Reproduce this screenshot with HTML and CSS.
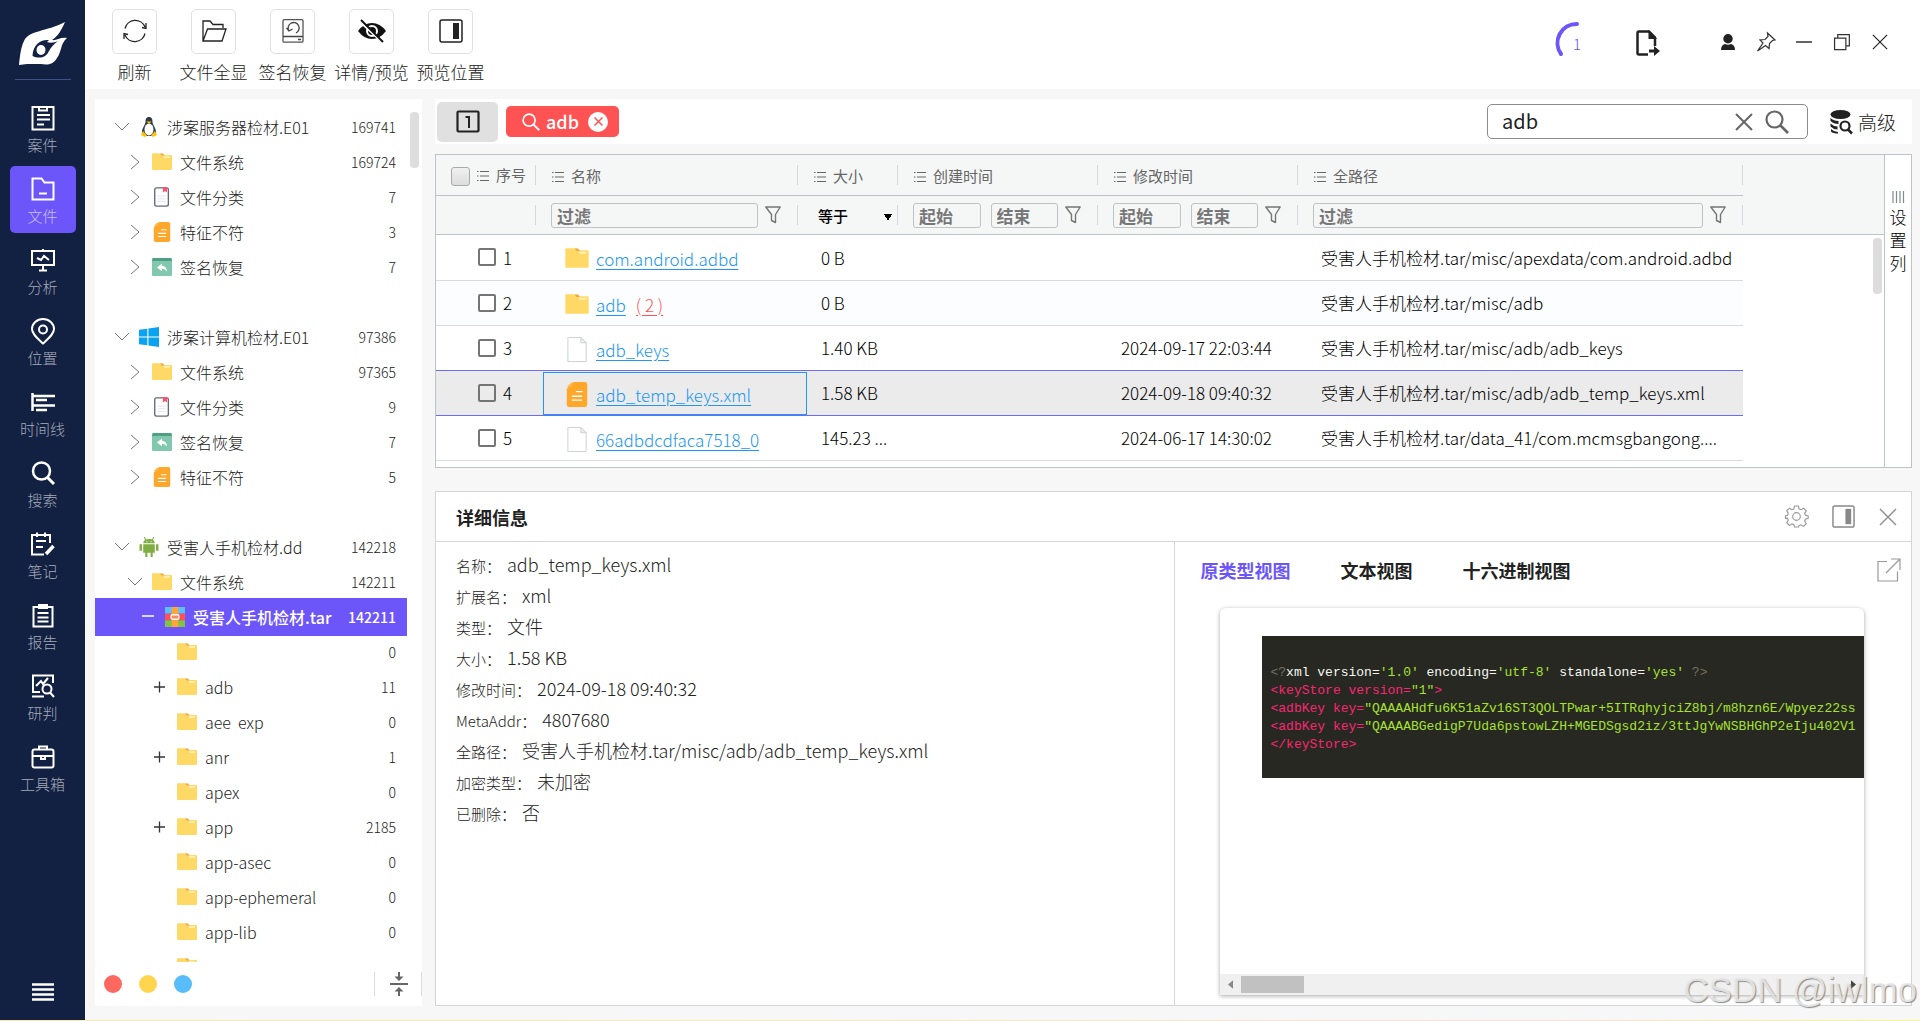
FILE: index.html
```html
<!DOCTYPE html>
<html lang="zh-CN">
<head>
    <meta charset="UTF-8">
    <meta name="viewport" content="width=device-width, initial-scale=1.0">
    <title>文件</title>
    <link rel="stylesheet" href="styles.css">
</head>
<body>
<!-- shared icons -->
<svg class="sprite" xmlns="http://www.w3.org/2000/svg">
    <symbol id="i-down" viewBox="0 0 16 16"><path d="M1 4l7 7 7-7" fill="none" stroke="#777"/></symbol>
    <symbol id="i-right" viewBox="0 0 16 16"><path d="M4 1l8 7-8 7" fill="none" stroke="#777"/></symbol>
    <symbol id="i-plus" viewBox="0 0 16 16"><path d="M2 8h11M7.500 2.500v11" fill="none" stroke="#333" stroke-width="1.300"/></symbol>
    <symbol id="i-minus" viewBox="0 0 16 16"><path d="M2 7h12" fill="none" stroke="#fff" stroke-width="1.500"/></symbol>
    <symbol id="i-folder" viewBox="0 0 20 18"><path d="M0 1.500Q0 .5 1 .5h6.500l2 1.500H0z" fill="#ffd15c"/><path d="M0 1.500Q0 .5 1 .5h9l2 1.500h7q1 0 1 1v13q0 1-1 1H1q-1 0-1-1z" fill="#ffd966"/><path d="M8 .5h3l1.500 2H9.500z" fill="#f5a54a"/><path d="M12 4h6" stroke="#fff3c4" stroke-width="1.500"/></symbol>
    <symbol id="i-class" viewBox="0 0 20 22"><rect x="2" y="1" width="15" height="20" rx="2" fill="#fff" stroke="#666a78" stroke-width="1.500"/><path d="M11 0h4.500v6l-2.200-1.500L11 6z" fill="#ff4f6d"/><path d="M5 10h9M5 13h9M5 16h9" stroke="#dfe3ee"/></symbol>
    <symbol id="i-orange" viewBox="0 0 18 22"><path d="M6 0h10q2 0 2 2v18q0 2-2 2H2q-2 0-2-2V6z" fill="#ffa72b"/><path d="M0 4.500L4.500 0v3q0 1.500-1.500 1.500z" fill="#ffb74f"/><path d="M8 8.500h6M4.500 12.500h9M4.500 16h9" stroke="#fff" stroke-width="1.200"/></symbol>
    <symbol id="i-restore-sign" viewBox="0 0 20 18"><rect width="20" height="18" rx="1" fill="#82c8ae"/><path d="M1 0h18l1 3H0z" fill="#4f9f83"/><path d="M5 9.500l5-4v2.300q4.500.3 5 5.700-2-3-5-2.800v2.600z" fill="#fff"/></symbol>
    <symbol id="i-linux" viewBox="0 0 18 20"><path d="M9 0c3 0 3.500 2.500 3.500 5S16 11 16 15s-3 4-7 4-7 0-7-4 3.500-7.500 3.500-10S6 0 9 0z" fill="#2d3a4a"/><ellipse cx="9" cy="12.500" rx="4.500" ry="6" fill="#fff"/><path d="M6.500 4.500h5L9 7z" fill="#ffc107"/><path d="M1 18l2-4 4 4.500-2 1.500zM17 18l-2-4-4 4.500 2 1.500z" fill="#ffc107"/></symbol>
    <symbol id="i-win" viewBox="0 0 18 18"><path d="M0 2.500l7.500-1v7H0zM8.500 1.300L18 0v8.500H8.500zM0 9.500h7.500v7l-7.500-1zM8.500 9.500H18V18l-9.500-1.300z" fill="#0aa3f2"/></symbol>
    <symbol id="i-android" viewBox="0 0 18 19"><path d="M3.500 7h11v8h-11zM5.500 15h2v4h-2zM10.500 15h2v4h-2zM0 7h2.300v6H0zM15.700 7H18v6h-2.300zM3.500 6q.5-4 5.500-4t5.500 4z" fill="#7fae42"/><path d="M6 3L4.500 0M12 3l1.500-3" stroke="#7fae42"/><path d="M6.500 4.500h1M10.500 4.500h1" stroke="#fff"/></symbol>
    <symbol id="i-rar" viewBox="0 0 18 18"><path d="M0 0h18v6H0z" fill="#5cc0fa"/><path d="M0 6h18v6H0z" fill="#ff5252"/><path d="M0 12h18v6H0z" fill="#82c341"/><path d="M6 0h6v18H6z" fill="#ffa53a"/><rect x="5.500" y="7" width="7" height="4" rx="1" fill="#ff8a50" stroke="#fff" stroke-width="1.200"/></symbol>
    <symbol id="i-file" viewBox="0 0 20 26"><path d="M.5.5H14l5.500 5.500v19.500H.5z" fill="#fff" stroke="#ccd0d6"/><path d="M14 .5V6h5.500z" fill="#eef0f3" stroke="#ccd0d6"/></symbol>
    <symbol id="i-list" viewBox="0 0 12 12"><path d="M0 1.500h1.500M3 1.500h9M0 6h1.500M3 6h9M0 10.500h1.500M3 10.500h9" stroke="#666" stroke-width="1.200"/></symbol>
    <symbol id="i-funnel" viewBox="0 0 16 18"><path d="M.8 1h14.400L10.500 8.500V16.500L6.500 14.500V8.500z" fill="none" stroke="#757575" stroke-width="1.400" stroke-linejoin="round"/></symbol>
    <symbol id="i-layout" viewBox="0 0 24 24"><rect x="1" y="1" width="22" height="22" rx="2" fill="none" stroke="currentColor" stroke-width="1.500"/><path d="M14 4h6v16h-6z" fill="currentColor"/></symbol>
    <symbol id="i-search" viewBox="0 0 24 24"><circle cx="9.500" cy="9.500" r="8" fill="none" stroke="currentColor" stroke-width="2.200"/><path d="M15.500 15.500L23 23" stroke="currentColor" stroke-width="2.600"/></symbol>
    <symbol id="i-close" viewBox="0 0 18 18"><path d="M1 1l16 16M17 1L1 17" fill="none" stroke="currentColor"/></symbol>
</svg>

<div class="app">
    <nav class="side">
        <svg class="logo" viewBox="0 0 48 44"><path d="M0 43C1 33 2 25 5 19 10 8 27 10 46 0 42 9 39 14 33 18 37 19 41 15 48 16 41 22 43 29 38 36 34 43 28 43 22 42H8z" fill="#fff"/><path d="M30 18C22 17 14 22 13.500 34 20 37 27 36 30 29 32 25 35 22 39 19 35 21 31 21 28 20z" fill="#122042"/><ellipse cx="22" cy="28" rx="4.500" ry="5" fill="#fff"/></svg>
        <hr>
        <a href="#" class="side-item"><svg viewBox="0 0 24 24"><path d="M1.500 1h21v22.500h-21z"/><path d="M8 1v3.500h8V1M6 9h13M6 13.500h13M6 18.500h7"/></svg>案件</a>
        <a href="#" class="side-item active"><svg viewBox="0 0 24 24"><path d="M1.500 1.500h9l3 4h9v17h-21zM8 16.500h8"/></svg>文件</a>
        <a href="#" class="side-item"><svg viewBox="0 0 24 24"><path d="M1 3h22v14H1zM12 1v2M12 17v5M8 22.500h8M6 10l4 2 3-4 5 4"/></svg>分析</a>
        <a href="#" class="side-item"><svg viewBox="0 0 24 24"><path d="M12 24.500C6 19 1 15 1 10a11 10 0 0 1 22 0c0 5-5 9-11 14.500z"/><circle cx="12" cy="10.500" r="4"/></svg>位置</a>
        <a href="#" class="side-item"><svg viewBox="0 0 24 24"><path d="M1.500 3v18M1 6h23M5 10h11M1 15.500h23M5 20h11" stroke-width="2.500"/></svg>时间线</a>
        <a href="#" class="side-item"><svg viewBox="0 0 24 24"><circle cx="10.500" cy="10" r="8.500" stroke-width="2.500"/><path d="M16.500 16.500l6.500 6.500" stroke-width="3"/></svg>搜索</a>
        <a href="#" class="side-item"><svg viewBox="0 0 24 24"><path d="M13 22.500H1V3h18v8M6 .5V5M14 .5V5M5 9h10M5 15h7"/><path d="M15 22l7.500-8" stroke-width="3.500"/></svg>笔记</a>
        <a href="#" class="side-item"><svg viewBox="0 0 24 24"><path d="M2.500 4h19v19.500h-19zM6.500 10h11M6.500 14.500h11M6.500 18.500h11"/><path d="M8 5V2h8v3z" fill="#fff"/></svg>报告</a>
        <a href="#" class="side-item"><svg viewBox="0 0 24 24"><path d="M22 9V1.500H2V18h7M1 22.500h12M5 12l5-5 2 3 5-6"/><circle cx="16" cy="15" r="4.500"/><path d="M19 18.500l4 4.500"/></svg>研判</a>
        <a href="#" class="side-item"><svg viewBox="0 0 24 24"><rect x="1.500" y="4.500" width="21" height="18" rx="2"/><path d="M8 4V1.500h8V4M2 11h20M10 11v3h4v-3"/></svg>工具箱</a>
        <button class="menu-btn" aria-label="菜单"><svg viewBox="0 0 22 18"><path d="M0 1.500h22M0 6.500h22M0 11.500h22M0 16.500h22" stroke="#fff" stroke-width="2.500"/></svg></button>
    </nav>

    <div class="content">
        <header class="toolbar">
            <div class="tools">
                <button class="tool"><span class="tool-icon"><svg viewBox="0 0 24 24"><path d="M2 9.500A10.500 10.500 0 0 1 22 8M22 14.500A10.500 10.500 0 0 1 2 16M23 4v5.500l-4-1M1 20v-5.500l4 1" fill="none" stroke="#222" stroke-width="1.300"/></svg></span>刷新</button>
                <button class="tool"><span class="tool-icon"><svg viewBox="0 0 24 24"><path d="M1 22V2h7l3 3.500h10V9M1 22L5.500 10H24l-4 12z" fill="none" stroke="#222" stroke-width="1.300"/></svg></span>文件全显</button>
                <button class="tool"><span class="tool-icon"><svg viewBox="0 0 24 24"><rect x="2" y=".7" width="20" height="22.500" rx="1" fill="none" stroke="#555" stroke-width="1.300"/><path d="M2 17.500h20M17 20.500h3M8 12a5.500 5.500 0 1 1 7 2M5.500 9L8 12l3.500-2" fill="none" stroke="#444" stroke-width="1.300"/></svg></span>签名恢复</button>
                <button class="tool"><span class="tool-icon"><svg class="eye" viewBox="0 0 28 24"><path d="M0 12Q6 4 14 4t14 8q-6 8-14 8T0 12z" fill="#111"/><circle cx="14" cy="12" r="5" fill="none" stroke="#fff" stroke-width="2"/><path d="M1 2l24 22" stroke="#fff" stroke-width="2"/><path d="M3 1l22 22" stroke="#111" stroke-width="2"/></svg></span>详情/预览</button>
                <button class="tool"><span class="tool-icon"><svg><use href="#i-layout"/></svg></span>预览位置</button>
            </div>
            <div class="window-tools">
                <div class="progress"><svg viewBox="0 0 42 42"><path d="M21 2A19 19 0 0 0 5 32" fill="none" stroke="#6c55f9" stroke-width="4" stroke-linecap="round"/></svg><span>1</span></div>
                <button class="export" aria-label="导出"><svg viewBox="0 0 24 26"><path d="M12 24.500H3q-1.500 0-1.500-1.500V3Q1.500 1.500 3 1.500h10l6 6V16" fill="none" stroke="#222" stroke-width="2.500"/><path d="M12.500 0L21 9h-8.500z" fill="#222"/><path d="M13 19.500h5V16l6 5-6 5v-3.500h-5z" fill="#222"/></svg></button>
                <div class="window-btns">
                    <button aria-label="用户"><svg viewBox="0 0 16 16"><path d="M8 0a4.500 4.500 0 1 1 0 9.500A4.500 4.500 0 0 1 8 0zM1 16q0-5 4-6 3 1.500 6 0 4 1 4 6z" fill="#222"/></svg></button>
                    <button aria-label="固定"><svg viewBox="1 1 16 16"><path d="M10.500 0l7.500 7-2.500.5-3 3-.5 5-3.500-3-8 5.500 5.500-8L3 7l5-.5 3-3z" fill="none" stroke="#333" stroke-width="1.200"/></svg></button>
                    <button aria-label="最小化"><svg viewBox="0 0 16 16"><path d="M0 8h16" stroke="#222" stroke-width="1.400"/></svg></button>
                    <button aria-label="还原"><svg viewBox="0 0 17 17"><path d="M.6 4.500h12v12H.6zM4 4V.7h12.300v12H13" fill="none" stroke="#333"/></svg></button>
                    <button aria-label="关闭"><svg><use href="#i-close"/></svg></button>
                </div>
            </div>
        </header>

        <div class="workspace">
            <aside class="tree-panel">
                <ul class="tree">
                    <li class="node"><svg class="twist"><use href="#i-down"/></svg><svg class="ico"><use href="#i-linux"/></svg><span>涉案服务器检材.E01</span><b>169741</b></li>
                    <li class="node l1"><svg class="twist"><use href="#i-right"/></svg><svg class="ico"><use href="#i-folder"/></svg><span>文件系统</span><b>169724</b></li>
                    <li class="node l1"><svg class="twist"><use href="#i-right"/></svg><svg class="ico"><use href="#i-class"/></svg><span>文件分类</span><b>7</b></li>
                    <li class="node l1"><svg class="twist"><use href="#i-right"/></svg><svg class="ico"><use href="#i-orange"/></svg><span>特征不符</span><b>3</b></li>
                    <li class="node l1"><svg class="twist"><use href="#i-right"/></svg><svg class="ico"><use href="#i-restore-sign"/></svg><span>签名恢复</span><b>7</b></li>
                    <li class="node root"><svg class="twist"><use href="#i-down"/></svg><svg class="ico"><use href="#i-win"/></svg><span>涉案计算机检材.E01</span><b>97386</b></li>
                    <li class="node l1"><svg class="twist"><use href="#i-right"/></svg><svg class="ico"><use href="#i-folder"/></svg><span>文件系统</span><b>97365</b></li>
                    <li class="node l1"><svg class="twist"><use href="#i-right"/></svg><svg class="ico"><use href="#i-class"/></svg><span>文件分类</span><b>9</b></li>
                    <li class="node l1"><svg class="twist"><use href="#i-right"/></svg><svg class="ico"><use href="#i-restore-sign"/></svg><span>签名恢复</span><b>7</b></li>
                    <li class="node l1"><svg class="twist"><use href="#i-right"/></svg><svg class="ico"><use href="#i-orange"/></svg><span>特征不符</span><b>5</b></li>
                    <li class="node root"><svg class="twist"><use href="#i-down"/></svg><svg class="ico"><use href="#i-android"/></svg><span>受害人手机检材.dd</span><b>142218</b></li>
                    <li class="node l1"><svg class="twist"><use href="#i-down"/></svg><svg class="ico"><use href="#i-folder"/></svg><span>文件系统</span><b>142211</b></li>
                    <li class="node l2 selected"><svg class="twist"><use href="#i-minus"/></svg><svg class="ico"><use href="#i-rar"/></svg><span>受害人手机检材.tar</span><b>142211</b></li>
                    <li class="node l3"><svg class="twist"></svg><svg class="ico"><use href="#i-folder"/></svg><span></span><b>0</b></li>
                    <li class="node l3"><svg class="twist"><use href="#i-plus"/></svg><svg class="ico"><use href="#i-folder"/></svg><span>adb</span><b>11</b></li>
                    <li class="node l3"><svg class="twist"></svg><svg class="ico"><use href="#i-folder"/></svg><span>aee&nbsp; exp</span><b>0</b></li>
                    <li class="node l3"><svg class="twist"><use href="#i-plus"/></svg><svg class="ico"><use href="#i-folder"/></svg><span>anr</span><b>1</b></li>
                    <li class="node l3"><svg class="twist"></svg><svg class="ico"><use href="#i-folder"/></svg><span>apex</span><b>0</b></li>
                    <li class="node l3"><svg class="twist"><use href="#i-plus"/></svg><svg class="ico"><use href="#i-folder"/></svg><span>app</span><b>2185</b></li>
                    <li class="node l3"><svg class="twist"></svg><svg class="ico"><use href="#i-folder"/></svg><span>app-asec</span><b>0</b></li>
                    <li class="node l3"><svg class="twist"></svg><svg class="ico"><use href="#i-folder"/></svg><span>app-ephemeral</span><b>0</b></li>
                    <li class="node l3"><svg class="twist"></svg><svg class="ico"><use href="#i-folder"/></svg><span>app-lib</span><b>0</b></li>
                    <li class="node l3"><svg class="twist"></svg><svg class="ico"><use href="#i-folder"/></svg></li>
                </ul>
                <div class="scroll-thumb tree-thumb"></div>
                <div class="tree-footer">
                    <i class="dot red"></i><i class="dot yellow"></i><i class="dot blue"></i>
                    <button class="collapse" aria-label="折叠"><svg viewBox="0 0 18 24"><path d="M0 12h18" stroke="#666" stroke-width="2"/><path d="M9 0v6M9 18v6" stroke="#666" stroke-width="2"/><path d="M4.500 4.500h9L9 9zM4.500 19.500h9L9 15z" fill="#666"/></svg></button>
                </div>
            </aside>

            <main class="main">
                <div class="search-bar">
                    <button class="tab-one" aria-label="1"><svg viewBox="0 0 24 24"><rect x="1.500" y="1.500" width="21" height="20" rx="1" fill="none" stroke="#222" stroke-width="2.200"/><path d="M9.500 7H13v11" fill="none" stroke="#222" stroke-width="2"/></svg></button>
                    <button class="chip"><svg class="chip-search"><use href="#i-search"/></svg>adb<span class="chip-x"><svg><use href="#i-close"/></svg></span></button>
                    <div class="search-box">
                        <input type="text" value="adb" aria-label="搜索">
                        <button aria-label="清除"><svg class="clear"><use href="#i-close"/></svg></button>
                        <button aria-label="搜索"><svg class="go"><use href="#i-search"/></svg></button>
                    </div>
                    <button class="advanced"><svg viewBox="0 0 23 24"><ellipse cx="10.500" cy="4.500" rx="10" ry="4.500" fill="#222"/><path d="M.5 8q3 3 8 3v3q-5 0-8-3zM.5 13.500q3 3 7 3v3q-4 0-7-3zM1 19q3 3 7 3v1.500q-5 0-7-2z" fill="#222"/><circle cx="15" cy="16" r="4.500" fill="#fff" stroke="#222" stroke-width="2.200"/><path d="M18 19.500l4 4" stroke="#222" stroke-width="2.500"/></svg>高级</button>
                </div>

                <section class="grid-panel">
                    <div class="grid-area">
                        <table class="grid">
                            <colgroup><col class="c-no"><col class="c-name"><col class="c-size"><col class="c-time"><col class="c-time"><col><col class="c-rest"></colgroup>
                            <thead>
                                <tr class="titles">
                                    <th><input type="checkbox" class="all" aria-label="全选"><svg class="list"><use href="#i-list"/></svg>序号</th>
                                    <th><svg class="list"><use href="#i-list"/></svg>名称</th>
                                    <th><svg class="list"><use href="#i-list"/></svg>大小</th>
                                    <th><svg class="list"><use href="#i-list"/></svg>创建时间</th>
                                    <th><svg class="list"><use href="#i-list"/></svg>修改时间</th>
                                    <th><svg class="list"><use href="#i-list"/></svg>全路径</th>
                                    <th></th>
                                </tr>
                                <tr class="filters">
                                    <th></th>
                                    <th><div class="filter"><input type="text" placeholder="过滤" aria-label="名称过滤"><svg><use href="#i-funnel"/></svg></div></th>
                                    <th><select aria-label="大小过滤"><option>等于</option></select></th>
                                    <th><div class="filter"><input type="text" placeholder="起始" aria-label="创建起始"><input type="text" placeholder="结束" aria-label="创建结束"><svg><use href="#i-funnel"/></svg></div></th>
                                    <th><div class="filter"><input type="text" placeholder="起始" aria-label="修改起始"><input type="text" placeholder="结束" aria-label="修改结束"><svg><use href="#i-funnel"/></svg></div></th>
                                    <th><div class="filter"><input type="text" placeholder="过滤" aria-label="路径过滤"><svg><use href="#i-funnel"/></svg></div></th>
                                    <th></th>
                                </tr>
                            </thead>
                            <tbody>
                                <tr><td><label><input type="checkbox">1</label></td><td><div class="name"><svg class="folder"><use href="#i-folder"/></svg><a href="#">com.android.adbd</a></div></td><td>0 B</td><td></td><td></td><td>受害人手机检材.tar/misc/apexdata/com.android.adbd</td><td></td></tr>
                                <tr><td><label><input type="checkbox">2</label></td><td><div class="name"><svg class="folder"><use href="#i-folder"/></svg><a href="#">adb</a><a href="#" class="count">( 2 )</a></div></td><td>0 B</td><td></td><td></td><td>受害人手机检材.tar/misc/adb</td><td></td></tr>
                                <tr><td><label><input type="checkbox">3</label></td><td><div class="name"><svg><use href="#i-file"/></svg><a href="#">adb_keys</a></div></td><td>1.40 KB</td><td></td><td>2024-09-17 22:03:44</td><td>受害人手机检材.tar/misc/adb/adb_keys</td><td></td></tr>
                                <tr class="current"><td><label><input type="checkbox">4</label></td><td class="focus"><div class="name"><svg><use href="#i-orange"/></svg><a href="#">adb_temp_keys.xml</a></div></td><td>1.58 KB</td><td></td><td>2024-09-18 09:40:32</td><td>受害人手机检材.tar/misc/adb/adb_temp_keys.xml</td><td></td></tr>
                                <tr><td><label><input type="checkbox">5</label></td><td><div class="name"><svg><use href="#i-file"/></svg><a href="#">66adbdcdfaca7518_0</a></div></td><td>145.23 ...</td><td></td><td>2024-06-17 14:30:02</td><td>受害人手机检材.tar/data_41/com.mcmsgbangong....</td><td></td></tr>
                            </tbody>
                        </table>
                        <div class="scroll-thumb grid-thumb"></div>
                    </div>
                    <button class="columns-btn"><svg viewBox="0 0 13 12"><path d="M1 0v12M4.500 0v12M8 0v12M11.500 0v12" stroke="#7f8c8d" stroke-width="1.200"/></svg><span>设置列</span></button>
                </section>

                <section class="detail">
                    <div class="detail-head">
                        <h2>详细信息</h2>
                        <button aria-label="设置"><svg viewBox="0 0 24 24"><path d="M10 1h4l.7 3 2 .9 2.700-1.600 2.800 2.800-1.700 2.600.9 2.100 2.800.7v2.500l-2.800.8-.9 2.100 1.700 2.600-2.800 2.800-2.700-1.600-2 .8L14 23h-4l-.7-2.500-2-.8-2.700 1.600-2.800-2.800 1.600-2.600-.8-2.100L.5 14v-2.500l2.100-.7.8-2.100-1.600-2.600 2.800-2.800 2.700 1.600 2-.9z" fill="none" stroke="#999" stroke-width="1.200"/><circle cx="12" cy="12" r="4" fill="none" stroke="#999" stroke-width="1.200"/></svg></button>
                        <button aria-label="预览位置"><svg><use href="#i-layout"/></svg></button>
                        <button aria-label="关闭"><svg class="small"><use href="#i-close"/></svg></button>
                    </div>
                    <div class="detail-body">
                        <dl class="info">
                            <div><dt>名称：</dt><dd>adb_temp_keys.xml</dd></div>
                            <div><dt>扩展名：</dt><dd>xml</dd></div>
                            <div><dt>类型：</dt><dd>文件</dd></div>
                            <div><dt>大小：</dt><dd>1.58 KB</dd></div>
                            <div><dt>修改时间：</dt><dd>2024-09-18 09:40:32</dd></div>
                            <div><dt>MetaAddr：</dt><dd>4807680</dd></div>
                            <div><dt>全路径：</dt><dd>受害人手机检材.tar/misc/adb/adb_temp_keys.xml</dd></div>
                            <div><dt>加密类型：</dt><dd>未加密</dd></div>
                            <div><dt>已删除：</dt><dd>否</dd></div>
                        </dl>
                        <div class="preview">
                            <div class="tabs">
                                <button class="on">原类型视图</button>
                                <button>文本视图</button>
                                <button>十六进制视图</button>
                                <button class="popout" aria-label="弹出"><svg viewBox="0 0 24 24"><path d="M10 3.500H1V23h19.500V13.500M14 1h9v11M23 1L9 15" fill="none" stroke="#999" stroke-width="1.200"/></svg></button>
                            </div>
                            <div class="card">
<pre><i>&lt;?</i>xml version=<s>'1.0'</s> encoding=<s>'utf-8'</s> standalone=<s>'yes'</s> <i>?&gt;</i>
<u>&lt;keyStore version=</u><s>"1"</s><u>&gt;</u>
<u>&lt;adbKey key=</u><s>"QAAAAHdfu6K51aZv16ST3QOLTPwar+5ITRqhyjciZ8bj/m8hzn6E/Wpyez22ss</s>
<u>&lt;adbKey key=</u><s>"QAAAABGedigP7Uda6pstowLZH+MGEDSgsd2iz/3ttJgYwNSBHGhP2eIju402V1</s>
<u>&lt;/keyStore&gt;</u></pre>
                                <div class="h-scroll"><svg viewBox="0 0 6 10"><path d="M6 0v10L0 5z" fill="#888"/></svg><div class="h-thumb"></div><svg viewBox="0 0 6 10"><path d="M0 0v10l6-5z" fill="#444"/></svg></div>
                            </div>
                        </div>
                    </div>
                </section>
            </main>
        </div>
    </div>
</div>
<div class="watermark">CSDN @iwlmo</div>
</body>
</html>
```

FILE: styles.css
```css
* {
    box-sizing: border-box;
}

body {
    margin: 0;
    height: 100vh;
    overflow: hidden;
    font-family: "Noto Sans CJK SC", sans-serif;
    font-size: 17px;
    font-weight: 300;
    color: #222;
    background: linear-gradient(90deg, #f8eab0, #fbe9c0 50%, #fde0d8 80%, #f8f590);
}

button {
    border: none;
    padding: 0;
    background: none;
    font-family: inherit;
    font-size: 17px;
    font-weight: inherit;
    color: inherit;
    cursor: pointer;
}

svg {
    display: block;
    flex: none;
    overflow: visible;
}

.sprite {
    position: absolute;
    width: 0;
    height: 0;
}

.app {
    display: flex;
    height: calc(100vh - 1px);
}

/* left navigation */
.side {
    display: flex;
    flex-direction: column;
    align-items: center;
    gap: 4px;
    flex: none;
    width: 85px;
    padding-bottom: 19px;
    background-color: #122042;
}

.logo {
    width: 48px;
    height: 44px;
    margin-top: 22px;
}

.side hr {
    width: 56px;
    height: 1px;
    margin: 9px 0 11px;
    border: none;
    background-color: #3f5187;
}

.side-item {
    display: flex;
    flex-direction: column;
    align-items: center;
    gap: 4px;
    width: 66px;
    height: 67px;
    padding-top: 11px;
    border-radius: 5px;
    font-size: 15px;
    line-height: 22px;
    color: #a5abb9;
    text-decoration: none;
}

.side-item svg {
    width: 24px;
    height: 24px;
    fill: none;
    stroke: #fff;
    stroke-width: 2;
}

.side-item.active {
    color: #c9c0fd;
    background-color: #6c55f9;
}

.menu-btn {
    margin-top: auto;
}

.menu-btn svg {
    width: 22px;
    height: 18px;
}

.content {
    display: flex;
    flex-direction: column;
    flex: 1;
    min-width: 0;
    background-color: #f7f7f7;
}

/* toolbar */
.toolbar {
    display: flex;
    justify-content: space-between;
    height: 89px;
    padding: 9px 32px 0 10px;
    background-color: #fff;
}

.tools {
    display: flex;
}

.tool {
    display: flex;
    flex-direction: column;
    align-items: center;
    gap: 5px;
    width: 79px;
    line-height: 26px;
    white-space: nowrap;
}

.tool-icon {
    display: flex;
    align-items: center;
    justify-content: center;
    width: 45px;
    height: 45px;
    padding: 0 0 1px;
    border: 1px solid #e0e0e0;
    border-radius: 5px;
}

.tool-icon svg {
    width: 24px;
    height: 24px;
}

.tool-icon .eye {
    width: 28px;
}

.window-tools {
    display: flex;
    height: 68px;
    align-items: center;
}

.progress {
    display: grid;
    place-items: center;
    width: 42px;
    height: 42px;
    margin-right: 38px;
    font-size: 15px;
    color: #6c55f9;
}

.progress > * {
    grid-area: 1 / 1;
}

.progress svg {
    width: 42px;
    height: 42px;
}

.export svg {
    width: 24px;
    height: 26px;
}

.window-btns {
    display: flex;
    gap: 22px;
    margin-left: 60px;
    padding-bottom: 2px;
    stroke-width: 1.3;
}

.window-btns svg {
    width: 16px;
    height: 16px;
}

.workspace {
    display: flex;
    flex: 1;
    gap: 13px;
    min-height: 0;
    padding: 10px 8px 14px 10px;
}

/* evidence tree */
.tree-panel {
    position: relative;
    display: flex;
    flex-direction: column;
    flex: none;
    width: 327px;
    background-color: #fff;
}

.tree {
    flex: 1;
    min-height: 0;
    overflow: hidden;
    width: 312px;
    margin: 0;
    padding: 10px 0 0;
    list-style: none;
}

.node {
    display: flex;
    align-items: center;
    height: 35px;
    padding: 0 11px 0 19px;
    font-size: 16px;
    white-space: pre;
}

.node.root {
    margin-top: 35px;
}

.node.l1 {
    padding-left: 32px;
}

.node.l2 {
    padding-left: 45px;
}

.node.l3 {
    padding-left: 57px;
}

.node.selected {
    height: 38px;
    margin: -1px 0 -2px;
    color: #fff;
    background-color: #6c55f9;
    font-weight: 500;
}

.twist {
    width: 16px;
    height: 16px;
    margin-right: 9px;
}

.ico {
    width: 20px;
    height: 20px;
    margin-right: 8px;
}

.node b {
    margin-left: auto;
    font-size: 14px;
    font-weight: inherit;
}

.scroll-thumb {
    position: absolute;
    width: 9px;
    height: 56px;
    border-radius: 4px;
    background-color: #ddd;
}

.tree-thumb {
    top: 13px;
    right: 3px;
}

.tree-footer {
    display: flex;
    align-items: center;
    gap: 17px;
    height: 44px;
    padding-left: 9px;
}

.dot {
    width: 18px;
    height: 18px;
    border-radius: 50%;
}

.red {
    background-color: #ff685e;
}

.yellow {
    background-color: #ffd54f;
}

.blue {
    background-color: #58bdfa;
}

.collapse {
    margin-left: auto;
    padding: 0 13px 0 15px;
    border: solid #ddd;
    border-width: 0 1px;
}

.collapse svg {
    width: 18px;
    height: 24px;
}

.main {
    display: flex;
    flex-direction: column;
    flex: 1;
    min-width: 0;
}

/* search row */
.search-bar {
    display: flex;
    align-items: center;
    gap: 8px;
    height: 45px;
    padding: 0 16px 0 2px;
    background-color: #fff;
}

.tab-one {
    display: grid;
    place-items: center;
    width: 61px;
    height: 40px;
    border-radius: 5px;
    background-color: #e0e0e0;
}

.tab-one svg {
    width: 24px;
    height: 24px;
}

.chip {
    display: flex;
    align-items: center;
    gap: 6px;
    height: 31px;
    padding: 0 11px 0 16px;
    border-radius: 5px;
    font-size: 18px;
    font-weight: 500;
    line-height: 29px;
    color: #fff;
    background-color: #ff5252;
}

.chip-search {
    width: 18px;
    height: 18px;
}

.chip-x {
    display: grid;
    place-items: center;
    width: 20px;
    height: 20px;
    margin-left: 3px;
    border-radius: 50%;
    color: #ff5252;
    background-color: #fff;
}

.chip-x svg {
    width: 9px;
    height: 9px;
    stroke-width: 3;
}

.search-box {
    display: flex;
    align-items: center;
    gap: 12px;
    width: 321px;
    height: 35px;
    margin-left: auto;
    padding: 0 18px 0 14px;
    border: 1px solid #8c8c8c;
    border-radius: 5px;
    color: #666;
}

.search-box input {
    flex: 1;
    min-width: 0;
    padding: 0 0 3px;
    border: none;
    outline: none;
    background: none;
    font-family: inherit;
    font-size: 20px;
    color: #222;
}

.search-box .clear {
    width: 18px;
    height: 18px;
    stroke-width: 2;
}

.search-box .go {
    width: 24px;
    height: 24px;
}

.advanced {
    display: flex;
    align-items: center;
    gap: 5px;
    margin-left: 14px;
    font-size: 19px;
}

.advanced svg {
    width: 23px;
    height: 24px;
}

/* file grid */
.grid-panel {
    display: flex;
    flex: none;
    margin-top: 10px;
    border: 1px solid #bdc3c7;
    background-color: #fff;
}

.grid-area {
    position: relative;
    flex: 1;
    min-width: 0;
    padding-bottom: 6px;
}

.grid {
    width: 100%;
    table-layout: fixed;
    border-spacing: 0;
    color: #000;
}

.c-no,
.c-size {
    width: 100px;
}

.c-name {
    width: 262px;
}

.c-time {
    width: 200px;
}

.c-rest {
    width: 141px;
}

.grid th {
    height: 39px;
    padding: 0 0 0 15px;
    border-bottom: 1px solid #bdc3c7;
    background: linear-gradient(#d5d8da, #d5d8da) right center / 1px 20px no-repeat #f5f7f7;
    font-size: 15px;
    font-weight: 400;
    text-align: left;
    color: #666;
}

.grid .titles th {
    height: 41px;
}

.grid th:last-child {
    background: #f5f7f7;
}

.grid .titles th:last-child {
    border-bottom-color: transparent;
}

.list {
    display: inline-block;
    width: 12px;
    height: 12px;
    margin: 0 7px 0 1px;
    vertical-align: -1px;
}

.all {
    appearance: none;
    width: 19px;
    height: 19px;
    margin: 0 6px 0 0;
    border: 1px solid #aaa;
    border-radius: 3px;
    background: linear-gradient(#f0f0f0, #dcdcdc);
    vertical-align: middle;
}

.filter {
    display: flex;
    align-items: center;
    gap: 7px;
    padding-right: 17px;
}

.filter input {
    flex: 1;
    width: 0;
    height: 25px;
    padding: 0 5px;
    border: 1px solid #bfc3c5;
    border-radius: 3px;
    background: none;
    font-family: inherit;
    font-size: 17px;
    font-weight: 700;
}

.filter input + input {
    margin-left: 3px;
}

.filter input::placeholder {
    color: #777;
}

.filter svg {
    width: 16px;
    height: 18px;
}

.grid select {
    width: 80px;
    padding-left: 5px;
    border: none;
    appearance: none;
    background-color: transparent;
    background-image: linear-gradient(to bottom left, #000 50%, transparent 50%), linear-gradient(to bottom right, #000 50%, transparent 50%);
    background-position: 71px 9px, 75px 9px;
    background-size: 4px 7px;
    background-repeat: no-repeat;
    font-family: inherit;
    font-size: 15px;
    font-weight: 500;
    color: #000;
}

.grid td {
    height: 45px;
    padding: 0 0 1px 23px;
    border-bottom: 1px solid #d9dcde;
    white-space: nowrap;
}

.grid tr:first-child td {
    height: 46px;
}

.grid td:last-child {
    border-color: transparent;
    background-color: #fff;
}

.grid td:first-child {
    padding-left: 42px;
}

.grid tr:nth-child(2) td:not(:last-child) {
    background-color: #fcfdfe;
}

.grid td label {
    display: flex;
    align-items: center;
    gap: 7px;
}

.grid td input {
    appearance: none;
    width: 18px;
    height: 18px;
    margin: 0;
    border: 2px solid #757575;
    border-radius: 2px;
    background-color: #fff;
}

.grid .current td:not(:last-child) {
    border-color: #6e6afa;
    background-color: #ebebeb;
}

/* line above the current row */
.grid tr:nth-child(3) td:not(:last-child) {
    border-color: #6e6afa;
}

.grid .current input {
    background-color: transparent;
}

.focus {
    position: relative;
}

.focus::after {
    content: "";
    position: absolute;
    top: 1px;
    bottom: 0;
    left: 7px;
    right: -9px;
    border: 1px solid #2196f3;
    pointer-events: none;
}

.name {
    display: flex;
    align-items: center;
    padding: 3px 0 0 6px;
}

.name svg {
    width: 24px;
    height: 25px;
    margin-right: 7px;
}

.name .folder {
    height: 21px;
}

.name a {
    color: #2196f3;
    text-underline-offset: 3px;
}

.name .count {
    margin-left: 10px;
    color: #ff5252;
}

.grid-thumb {
    top: 83px;
    right: 2px;
}

.columns-btn {
    display: flex;
    flex-direction: column;
    align-items: center;
    flex: none;
    gap: 2px;
    width: 27px;
    padding-top: 36px;
    border-left: 1px solid #bdc3c7;
    color: #000;
}

.columns-btn svg {
    width: 13px;
    height: 12px;
}

.columns-btn span {
    width: 17px;
    line-height: 23px;
}

/* detail */
.detail {
    display: flex;
    flex-direction: column;
    flex: 1;
    min-height: 0;
    margin-top: 23px;
    border: 1px solid #d3d5d6;
    background-color: #fff;
}

.detail-head {
    display: flex;
    align-items: center;
    gap: 24px;
    height: 50px;
    padding: 0 14px 0 20px;
    border-bottom: 1px solid #d3d5d6;
    color: #888;
}

.detail-head h2 {
    margin: 0 auto 0 0;
    font-size: 18px;
    color: #222;
}

.detail-head svg {
    width: 23px;
    height: 23px;
}

.detail-head .small {
    width: 18px;
    height: 18px;
    stroke-width: 1.3;
}

.detail-body {
    display: flex;
    flex: 1;
    min-height: 0;
}

.info {
    flex: 1;
    margin: 0;
    padding: 7px 20px;
}

.info div {
    display: flex;
    align-items: baseline;
    height: 31px;
    line-height: 31px;
}

.info dt {
    font-size: 15px;
}

.info dd {
    margin: 0 0 0 6px;
    font-size: 18px;
}

.preview {
    display: flex;
    flex-direction: column;
    flex: none;
    width: 50%;
    border-left: 1px solid #d3d5d6;
}

.tabs {
    display: flex;
    align-items: center;
    gap: 50px;
    height: 58px;
    padding: 0 10px 2px 26px;
}

.tabs button {
    font-size: 18px;
    font-weight: 700;
}

.tabs .on {
    color: #6c55f9;
}

.tabs .popout {
    margin-left: auto;
}

.popout svg {
    width: 24px;
    height: 24px;
}

.card {
    display: flex;
    flex-direction: column;
    flex: 1;
    min-height: 0;
    margin: 8px 47px 10px 45px;
    padding-top: 28px;
    border-radius: 6px 6px 0 0;
    box-shadow: 0 1px 4px rgba(0, 0, 0, 0.35);
    overflow: hidden;
}

.card pre {
    margin: 0 0 0 42px;
    padding: 28px 0 24px 9px;
    overflow: hidden;
    background-color: #272822;
    font-family: "Liberation Mono", monospace;
    font-size: 13px;
    line-height: 18px;
    color: #f8f8f2;
}

.card pre i {
    font-style: normal;
    color: #75715e;
}

.card pre u {
    text-decoration: none;
    color: #f92672;
}

.card pre s {
    text-decoration: none;
    color: #a6e22e;
}

.h-scroll {
    display: flex;
    align-items: center;
    gap: 8px;
    height: 21px;
    margin-top: auto;
    padding: 0 8px;
    background-color: #f0f0f0;
}

.h-scroll svg {
    width: 5px;
    height: 9px;
}

.h-thumb {
    width: 63px;
    height: 17px;
    margin-right: auto;
    background-color: #c1c1c1;
}

.watermark {
    position: absolute;
    right: 3px;
    bottom: 11px;
    font-family: "Liberation Sans", sans-serif;
    font-size: 35px;
    line-height: 40px;
    color: rgba(235, 235, 235, 0.9);
    text-shadow: 1px 1px 1px #888;
}
```
